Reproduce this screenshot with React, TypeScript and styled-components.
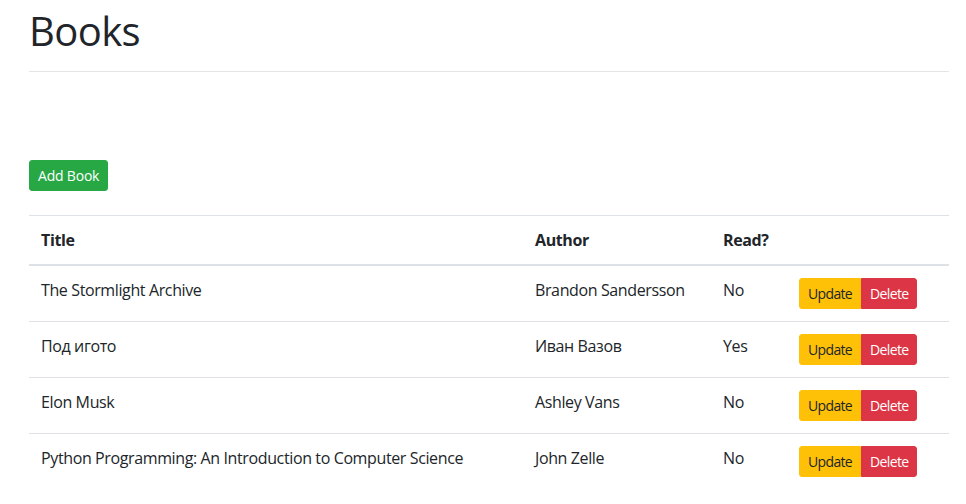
import React from 'react';
import styled, {createGlobalStyle} from 'styled-components';

const GlobalStyle = createGlobalStyle`
    body {
        margin: 0;
        background: #fff;
        color: #212529;
        font-family: "Segoe UI", "Open Sans", "Noto Sans", sans-serif;
        font-size: 16px;
        line-height: 1.5;
        letter-spacing: -0.38px;
    }
`

const Page = styled.div`
    width: 920px;
    padding: 0 17px 0 29px;
`

const Heading = styled.h1`
    margin: 7px 0 0 0;
    font-size: 40px;
    font-weight: 500;
    line-height: 48px;
    letter-spacing: -0.6px;
    padding-bottom: 16px;
    border-bottom: 1px solid rgba(0, 0, 0, 0.1);
`

const Toolbar = styled.div`
    display: flex;
    padding: 88px 0 24px 0;
`

const Button = styled.button<{variant: 'success' | 'warning' | 'danger'}>`
    font-family: inherit;
    font-size: 14px;
    line-height: 21px;
    letter-spacing: -0.2px;
    padding: 4px 8px;
    border: 1px solid transparent;
    border-radius: 3px;
    cursor: pointer;
    color: ${props => props.variant === 'warning' ? '#212529' : '#fff'};
    background: ${props => props.variant === 'success' ? '#28a745' : props.variant === 'warning' ? '#ffc107' : '#dc3545'};
    border-color: ${props => props.variant === 'success' ? '#28a745' : props.variant === 'warning' ? '#ffc107' : '#dc3545'};
`

const ButtonGroup = styled.div`
    display: inline-flex;

    & > button {
        letter-spacing: -0.65px;
    }
    & > button:first-child {
        border-top-right-radius: 0;
        border-bottom-right-radius: 0;
    }
    & > button:last-child {
        border-top-left-radius: 0;
        border-bottom-left-radius: 0;
    }
`

const Table = styled.table`
    width: 920px;
    border-collapse: collapse;
    table-layout: fixed;
`

const HeadCell = styled.th<{$width: number}>`
    width: ${props => props.$width - 24}px;
    text-align: left;
    font-weight: 700;
    padding: 12px;
    vertical-align: bottom;
    border-top: 1px solid #dee2e6;
    border-bottom: 2px solid #dee2e6;
`

const Cell = styled.td`
    padding: 12px;
    vertical-align: top;
    border-top: 1px solid #dee2e6;
`

interface Book {
  title: string
  author: string
  read: boolean
}

const books: Book[] = [
  {title: 'The Stormlight Archive', author: 'Brandon Sandersson', read: false},
  {title: 'Под игото', author: 'Иван Вазов', read: true},
  {title: 'Elon Musk', author: 'Ashley Vans', read: false},
  {title: 'Python Programming: An Introduction to Computer Science', author: 'John Zelle', read: false},
]

const App = () => {
  return (
    <Page>
      <GlobalStyle />
      <Heading>Books</Heading>
      <Toolbar>
        <Button variant="success">Add Book</Button>
      </Toolbar>
      <Table>
        <thead>
          <tr>
            <HeadCell $width={494}>Title</HeadCell>
            <HeadCell $width={188}>Author</HeadCell>
            <HeadCell $width={76}>Read?</HeadCell>
            <HeadCell $width={162}></HeadCell>
          </tr>
        </thead>
        <tbody>
          {books.map(book => (
            <tr key={book.title}>
              <Cell>{book.title}</Cell>
              <Cell>{book.author}</Cell>
              <Cell>{book.read ? 'Yes' : 'No'}</Cell>
              <Cell>
                <ButtonGroup>
                  <Button variant="warning">Update</Button>
                  <Button variant="danger">Delete</Button>
                </ButtonGroup>
              </Cell>
            </tr>
          ))}
        </tbody>
      </Table>
    </Page>
  )
}

export default App;
